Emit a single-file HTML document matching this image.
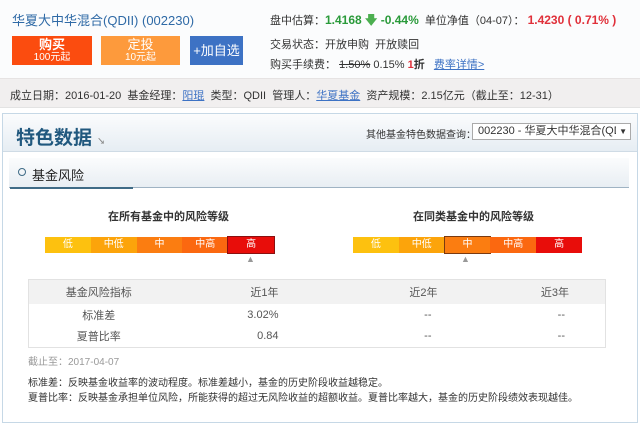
<!DOCTYPE html>
<html><head><meta charset="utf-8"><style>
*{margin:0;padding:0;box-sizing:border-box}
body{width:640px;height:427px;overflow:hidden;background:#fff;font-family:"Liberation Sans","Noto Sans CJK SC",sans-serif;font-size:11px;color:#333;position:relative}
.a{position:absolute;white-space:nowrap}
.btn{position:absolute;color:#fff;text-align:center;line-height:13px}
.seg{float:left;width:45.8px;height:16px;line-height:16px;text-align:center;color:#fff;font-size:10px}
table{border-collapse:collapse}
</style></head><body>
<div class="a" style="left:0;top:0;width:640px;height:78px;background:#fbfcfd"></div>
<div class="a" style="left:12px;top:10px;font-size:13px;color:#2f6aa6">华夏大中华混合(QDII) (002230)</div>
<div class="btn" style="left:12px;top:36px;width:80px;height:29px;background:#fb4c0f;padding-top:2px"><div style="font-size:13px;font-weight:bold">购买</div><div style="font-size:10px">100元起</div></div>
<div class="btn" style="left:101px;top:36px;width:79px;height:29px;background:#fd9a3c;padding-top:2px"><div style="font-size:13px">定投</div><div style="font-size:10px">10元起</div></div>
<div class="btn" style="left:190px;top:36px;width:53px;height:29px;background:#3d72c4;line-height:29px;font-size:13px">+加自选</div>
<div class="a" style="left:270px;top:11px;font-size:11px">盘中估算：<b style="color:#2a9a3a;font-size:12px">1.4168 <span style="color:#4caf50">&#129095;</span> -0.44%</b>&nbsp; 单位净值（04-07）： <b style="color:#e0303a;font-size:12px">1.4230 ( 0.71% )</b></div>
<div class="a" style="left:270px;top:36px">交易状态：开放申购&nbsp; 开放赎回</div>
<div class="a" style="left:270px;top:56px">购买手续费： <s>1.50%</s> 0.15% <b style="color:#e0303a">1</b><b>折</b>&nbsp;&nbsp; <u style="color:#3d72c4">费率详情&gt;</u></div>
<div class="a" style="left:0;top:78px;width:640px;height:30px;background:#f1efef;border-top:1px solid #e6e3e3;border-bottom:1px solid #e3e3e3"></div>
<div class="a" style="left:10px;top:87px">成立日期：2016-01-20&nbsp; 基金经理：<u style="color:#3d72c4">阳琨</u>&nbsp; 类型：QDII&nbsp; 管理人：<u style="color:#3d72c4">华夏基金</u>&nbsp; 资产规模：2.15亿元（截止至：12-31）</div>
<div class="a" style="left:2px;top:113px;width:636px;height:310px;border:1px solid #c6d8e6;background:#fff"></div>
<div class="a" style="left:3px;top:114px;width:634px;height:38px;background:linear-gradient(#fbfcfd,#e6edf3);border-bottom:1px solid #cfdbe5"></div>
<div class="a" style="left:16px;top:123px;font-size:19px;font-weight:bold;color:#20587e">特色数据 <span style="font-size:8px;color:#888">↘</span></div>
<div class="a" style="left:366px;top:126px;font-size:10px">其他基金特色数据查询：</div>
<div class="a" style="left:472px;top:123px;width:159px;height:17px;border:1px solid #aaa;background:#fff;font-size:11px;line-height:15px;padding-left:5px;overflow:hidden">002230 - 华夏大中华混合(QD<span style="position:absolute;right:3px;top:0;font-size:8px;background:#fff;padding-left:3px">▼</span></div>
<div class="a" style="left:9px;top:158px;width:620px;height:30px;background:linear-gradient(#fbfcfd,#e8eef3);border-bottom:1px solid #9fb3c3"></div>
<div class="a" style="left:10px;top:187px;width:123px;height:2px;background:#3f6b86"></div>
<div class="a" style="left:18px;top:168px;width:8px;height:8px;border:1.5px solid #3f6b86;border-radius:50%"></div>
<div class="a" style="left:32px;top:165px;font-size:13px;color:#222">基金风险</div>
<div class="a" style="left:108px;top:208px;font-weight:bold;font-size:11px">在所有基金中的风险等级</div>
<div class="a" style="left:413px;top:208px;font-weight:bold;font-size:11px">在同类基金中的风险等级</div>
<div class="a" style="left:45px;top:237px;width:229px">
<div class="seg" style="background:#fdc10f">低</div><div class="seg" style="background:#fca40b">中低</div><div class="seg" style="background:#fb7d11">中</div><div class="seg" style="background:#fb6810">中高</div><div class="seg" style="background:#e80d0a;outline:1px solid #8a1010">高</div></div>
<div class="a" style="left:353px;top:237px;width:229px">
<div class="seg" style="background:#fdc10f">低</div><div class="seg" style="background:#fca40b">中低</div><div class="seg" style="background:#fb7d11;outline:1px solid #7a3a10">中</div><div class="seg" style="background:#fb6810">中高</div><div class="seg" style="background:#e80d0a">高</div></div>
<div class="a" style="left:246px;top:254px;font-size:9px;color:#999">▲</div>
<div class="a" style="left:461px;top:254px;font-size:9px;color:#999">▲</div>
<table class="a" style="left:28px;top:279px;width:578px;border:1px solid #e2e2e2;font-size:11px;color:#555">
<tr style="background:#f2f2f2;height:24px"><td style="width:140px;text-align:center">基金风险指标</td><td style="width:130px;text-align:right;padding-right:20px">近1年</td><td style="text-align:right;padding-right:58px">近2年</td><td style="text-align:right;padding-right:36px;width:110px">近3年</td></tr>
<tr style="height:22px"><td style="text-align:center">标准差</td><td style="text-align:right;padding-right:20px">3.02%</td><td style="text-align:right;padding-right:64px">--</td><td style="text-align:right;padding-right:40px">--</td></tr>
<tr style="height:22px"><td style="text-align:center">夏普比率</td><td style="text-align:right;padding-right:20px">0.84</td><td style="text-align:right;padding-right:64px">--</td><td style="text-align:right;padding-right:40px">--</td></tr>
</table>
<div class="a" style="left:28px;top:353px;font-size:10px;color:#999">截止至：2017-04-07</div>
<div class="a" style="left:28px;top:374px;font-size:10px;color:#333">标准差：反映基金收益率的波动程度。标准差越小，基金的历史阶段收益越稳定。</div>
<div class="a" style="left:28px;top:389px;font-size:10px;color:#333">夏普比率：反映基金承担单位风险，所能获得的超过无风险收益的超额收益。夏普比率越大，基金的历史阶段绩效表现越佳。</div>
</body></html>
